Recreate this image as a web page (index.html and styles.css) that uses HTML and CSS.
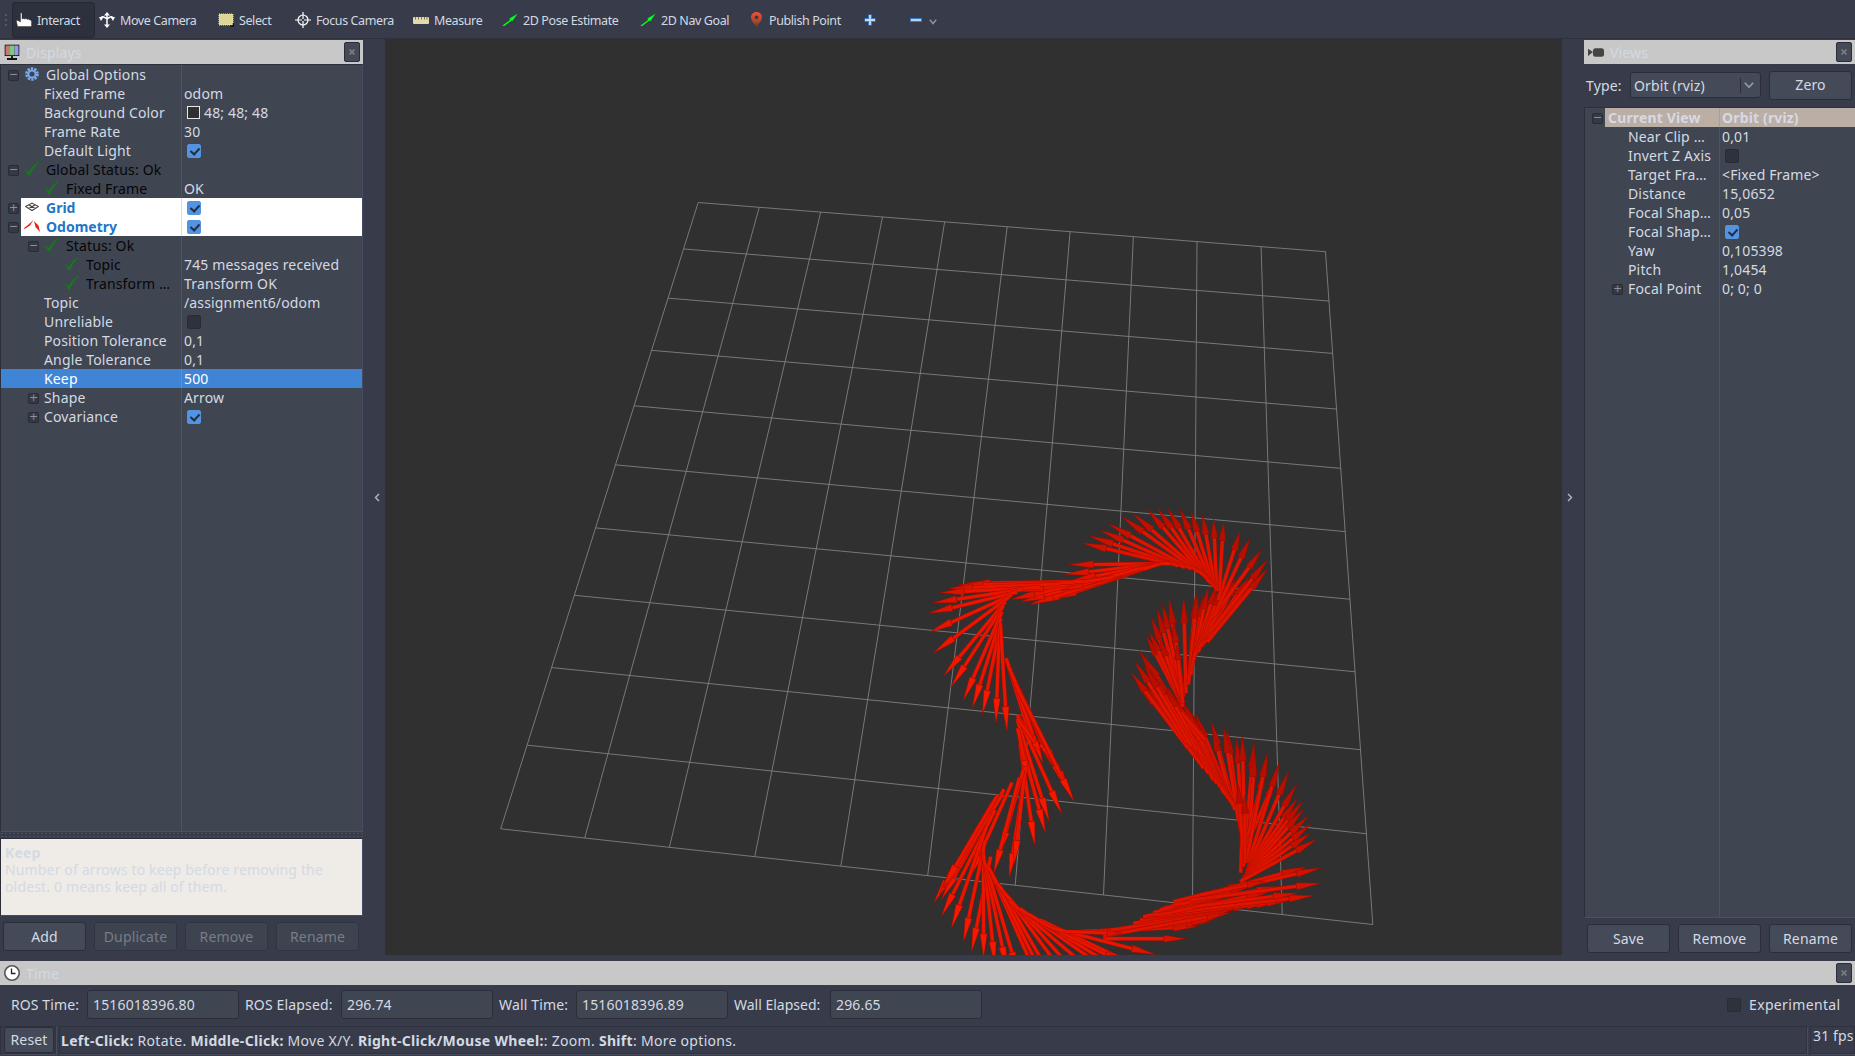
FILE: index.html
```html
<!DOCTYPE html>
<html lang="en">
<head>
<meta charset="utf-8">
<title>RViz</title>
<link rel="stylesheet" href="styles.css">
</head>
<body>
<svg class="defs" aria-hidden="true">
  <symbol id="tick" viewBox="0 0 14 14"><path d="M0.5 8 C2 8 3 9.5 3.8 11 C6 6 9 2.5 13.5 0.5 C9.5 4 6.500 8.500 4.600 13.500 C3.200 13.500 2 10 0.500 8Z" fill="#18781c" stroke="#18781c" stroke-width=".8"/></symbol>
  <symbol id="arrow" viewBox="0 0 16 14"><path d="M.5 12.500 L8 7 L7.500 5.500 L15.500 .8 L10.500 8 L9.500 7.500 L2 13.200Z" fill="#0f2"/></symbol>
  <symbol id="close" viewBox="0 0 8 8"><path d="M1.500 1.500 L6.500 6.500 M6.500 1.500 L1.500 6.500" stroke="#817f7e" stroke-width="1.700"/></symbol>
</svg>
<div class="app">
  <header class="toolbar">
    <span class="grip"></span>
    <button class="tool active"><svg width="16" height="16" viewBox="0 0 16 16"><path d="M4.500 1 Q6 0 6 2 V7 Q8 5.800 8.500 7 Q10.500 6 11 7.500 Q13 6.500 13.500 8 Q15.500 7.500 15.500 9.500 V14.500 H1.500 L.5 9.500 Q.5 7.800 2 8.500 L4.500 10Z" fill="#fff" stroke="#222" stroke-width=".4"/></svg>Interact</button>
    <button class="tool move"><svg width="16" height="16" viewBox="0 0 16 16" fill="none" stroke="#fff" stroke-width="1.500"><path d="M8 2V14M8 7Q3 3 2 6M8 7Q13 3 14 6"/><path d="M8 0L11 3.500H5ZM8 16L11 12.500H5ZM0 5L4.500 5L2 9ZM16 5L11.500 5L14 9Z" fill="#fff" stroke="none"/></svg>Move Camera</button>
    <button class="tool select"><svg width="16" height="14" viewBox="0 0 16 14"><rect x="1" y="1" width="14" height="11" fill="#ddd694" stroke="#f3ecb4" stroke-dasharray="1 1"/><path d="M12 13h3.500V10" stroke="#111" stroke-width="1.500" fill="none"/></svg>Select</button>
    <button class="tool focus"><svg width="16" height="16" viewBox="0 0 16 16" fill="none" stroke="#fff" stroke-width="1.200"><circle cx="8" cy="8" r="5"/><path d="M8 0V7M8 9V16M0 8H7M9 8H16"/></svg>Focus Camera</button>
    <button class="tool measure"><svg width="16" height="7" viewBox="0 0 16 7"><rect width="16" height="7" rx="1" fill="#e4d9aa"/><path d="M2.500 0V2.500M5.500 0V2.500M8.500 0V2.500M11.500 0V2.500M14 0V2.500" stroke="#655d3c" stroke-width=".8"/></svg>Measure</button>
    <button class="tool pose"><svg width="16" height="14"><use href="#arrow"/></svg>2D Pose Estimate</button>
    <button class="tool nav"><svg width="16" height="14"><use href="#arrow"/></svg>2D Nav Goal</button>
    <button class="tool publish"><svg width="11" height="16" viewBox="0 0 11 16"><defs><linearGradient id="pin" x2="0" y2="1"><stop stop-color="#ef5238"/><stop offset=".6" stop-color="#a9482b"/><stop offset="1" stop-color="#45362f"/></linearGradient></defs><path d="M5.500 0C9 0 11 2.500 11 5.500C11 9 7 12 5.500 16C4 12 0 9 0 5.500C0 2.500 2 0 5.500 0Z" fill="url(#pin)"/><circle cx="5.500" cy="5.300" r="1.800" fill="#333643"/></svg>Publish Point</button>
    <button class="tool plus"><svg width="12" height="12" viewBox="0 0 12 12"><path d="M6 .5V11.500M.5 6H11.500" stroke="#3a78c8" stroke-width="4"/><path d="M6 1V11M1 6H11" stroke="#c5dcf5" stroke-width="1.800"/></svg></button>
    <button class="tool minus"><svg width="12" height="4" viewBox="0 0 12 4"><path d="M0 2H12" stroke="#3a78c8" stroke-width="4"/><path d="M1 2H11" stroke="#c5dcf5" stroke-width="1.800"/></svg><svg class="drop" width="8" height="6" viewBox="0 0 8 6"><path d="M.8 .8L4 4.500L7.200 .8" fill="none" stroke="#8f939e" stroke-width="1.500"/></svg></button>
  </header>

  <main class="workspace">
    <section class="dock left">
      <h2 class="title"><svg width="16" height="16" viewBox="0 0 16 16"><rect x=".7" y=".7" width="14.600" height="11.300" fill="#111"/><path d="M1.500 1.500H6V11.200H1.500Z" fill="#c77"/><path d="M6 1.500H10.500V11.200H6Z" fill="#7c7"/><path d="M10.500 1.500H14.500V11.200H10.500Z" fill="#99e"/><path d="M8 12V14.500M3 15H13" stroke="#111" stroke-width="1.800"/></svg><span>Displays</span><button class="x"><svg width="8" height="8"><use href="#close"/></svg></button></h2>
      <div class="tree">
        <div class="row"><div class="name"><i class="tw">−</i><svg class="ico" viewBox="0 0 14 14"><circle cx="7" cy="7" r="5.500" fill="none" stroke="#78aaea" stroke-width="2.600" stroke-dasharray="2.300 1.150"/><circle cx="7" cy="7" r="3.600" fill="none" stroke="#78aaea" stroke-width="2"/></svg>Global Options</div><div class="val"></div></div>
        <div class="row"><div class="name prop">Fixed Frame</div><div class="val">odom</div></div>
        <div class="row"><div class="name prop">Background Color</div><div class="val"><i class="swatch"></i>48; 48; 48</div></div>
        <div class="row"><div class="name prop">Frame Rate</div><div class="val">30</div></div>
        <div class="row"><div class="name prop">Default Light</div><div class="val"><i class="chk on"></i></div></div>
        <div class="row ok"><div class="name"><i class="tw">−</i><svg class="ico"><use href="#tick"/></svg>Global Status: Ok</div><div class="val"></div></div>
        <div class="row ok"><div class="name l2"><svg class="ico"><use href="#tick"/></svg>Fixed Frame</div><div class="val">OK</div></div>
        <div class="row display"><div class="name"><i class="tw">+</i><svg class="ico" viewBox="0 0 14 14"><path d="M.5 6.500L7 3L13.500 6.500L7 10.500ZM3.700 4.700L10.300 8.500M10.300 4.700L3.700 8.500" fill="none" stroke="#444" stroke-width="1.100"/></svg>Grid</div><div class="val"><i class="chk on"></i></div></div>
        <div class="row display"><div class="name"><i class="tw">−</i><svg class="ico odo" viewBox="0 0 16 14"><path d="M0 9L4.500 5.500L9.500 1L6 6.500L.5 10ZM10 2L14.500 6.500L16 13L11.500 8Z" fill="#e21"/></svg>Odometry</div><div class="val"><i class="chk on"></i></div></div>
        <div class="row ok"><div class="name l1"><i class="tw">−</i><svg class="ico"><use href="#tick"/></svg>Status: Ok</div><div class="val"></div></div>
        <div class="row ok"><div class="name l3"><svg class="ico"><use href="#tick"/></svg>Topic</div><div class="val">745 messages received</div></div>
        <div class="row ok"><div class="name l3"><svg class="ico"><use href="#tick"/></svg>Transform …</div><div class="val">Transform OK</div></div>
        <div class="row"><div class="name prop">Topic</div><div class="val">/assignment6/odom</div></div>
        <div class="row"><div class="name prop">Unreliable</div><div class="val"><i class="chk"></i></div></div>
        <div class="row"><div class="name prop">Position Tolerance</div><div class="val">0,1</div></div>
        <div class="row"><div class="name prop">Angle Tolerance</div><div class="val">0,1</div></div>
        <div class="row selected"><div class="name prop">Keep</div><div class="val">500</div></div>
        <div class="row"><div class="name l1 plain"><i class="tw">+</i>Shape</div><div class="val">Arrow</div></div>
        <div class="row"><div class="name l1 plain"><i class="tw">+</i>Covariance</div><div class="val"><i class="chk on"></i></div></div>
        <div class="rest"></div>
      </div>
      <div class="splitter"></div>
      <div class="help"><b>Keep</b><br>Number of arrows to keep before removing the oldest. 0 means keep all of them.</div>
      <div class="buttons"><button class="btn">Add</button><button class="btn off">Duplicate</button><button class="btn off">Remove</button><button class="btn off">Rename</button></div>
    </section>

    <div class="collapse to-left"><svg width="6" height="9" viewBox="0 0 6 9"><path d="M5 1L1.500 4.500L5 8" fill="none" stroke="#b4bac5" stroke-width="1.400"/></svg></div>
    <svg class="viewport" id="scene" viewBox="385 39 1177 916"></svg>
    <div class="collapse to-right"><svg width="6" height="9" viewBox="0 0 6 9"><path d="M1 1L4.500 4.500L1 8" fill="none" stroke="#b4bac5" stroke-width="1.400"/></svg></div>

    <section class="dock right">
      <h2 class="title"><svg width="16" height="9" viewBox="0 0 16 9"><rect x="5" y=".3" width="11" height="8.400" rx="2.500" fill="#444"/><path d="M0 .8L5 4L0 8Z" fill="#444"/></svg><span>Views</span><button class="x"><svg width="8" height="8"><use href="#close"/></svg></button></h2>
      <div class="type"><label>Type:</label><div class="combo"><span>Orbit (rviz)</span><svg width="10" height="7" viewBox="0 0 10 7"><path d="M.8 .8L5 5.200L9.200 .8" fill="none" stroke="#9da2ad" stroke-width="1.500"/></svg></div><button class="btn">Zero</button></div>
      <div class="tree">
        <div class="row current"><div class="name plain"><i class="tw">−</i>Current View</div><div class="val">Orbit (rviz)</div></div>
        <div class="row"><div class="name l2 plain">Near Clip …</div><div class="val">0,01</div></div>
        <div class="row"><div class="name l2 plain">Invert Z Axis</div><div class="val"><i class="chk"></i></div></div>
        <div class="row"><div class="name l2 plain">Target Fra…</div><div class="val">&lt;Fixed Frame&gt;</div></div>
        <div class="row"><div class="name l2 plain">Distance</div><div class="val">15,0652</div></div>
        <div class="row"><div class="name l2 plain">Focal Shap…</div><div class="val">0,05</div></div>
        <div class="row"><div class="name l2 plain">Focal Shap…</div><div class="val"><i class="chk on"></i></div></div>
        <div class="row"><div class="name l2 plain">Yaw</div><div class="val">0,105398</div></div>
        <div class="row"><div class="name l2 plain">Pitch</div><div class="val">1,0454</div></div>
        <div class="row"><div class="name l1 plain"><i class="tw">+</i>Focal Point</div><div class="val">0; 0; 0</div></div>
        <div class="rest"></div>
      </div>
      <div class="buttons"><button class="btn">Save</button><button class="btn">Remove</button><button class="btn">Rename</button></div>
    </section>
  </main>

  <section class="time">
    <h2 class="title"><svg width="16" height="16" viewBox="0 0 16 16"><circle cx="8" cy="8" r="7.200" fill="#fff" stroke="#555" stroke-width="1.600"/><path d="M7.500 3.500V8.500H11.500" fill="none" stroke="#222" stroke-width="1.300"/></svg><span>Time</span><button class="x"><svg width="8" height="8"><use href="#close"/></svg></button></h2>
    <div class="clocks">
      <label class="c1">ROS Time:</label><div class="field">1516018396.80</div>
      <label class="c2">ROS Elapsed:</label><div class="field">296.74</div>
      <label class="c3">Wall Time:</label><div class="field">1516018396.89</div>
      <label class="c4">Wall Elapsed:</label><div class="field">296.65</div>
      <i class="chk exp"></i><label class="c5">Experimental</label>
    </div>
  </section>

  <footer class="status">
    <div class="cell reset"><button class="btn">Reset</button></div>
    <div class="cell hint"><span><b>Left-Click:</b> Rotate. <b>Middle-Click:</b> Move X/Y. <b>Right-Click/Mouse Wheel:</b>: Zoom. <b>Shift</b>: More options.</span></div>
    <div class="cell fps">31 fps</div>
  </footer>
</div>
<script src="scene.js"></script>
</body>
</html>
```
FILE: styles.css
```css
* { box-sizing: border-box; }
body { margin: 0; background: #383c4a; color: #d3dae3; font: 14px/19px "Noto Sans", "Open Sans", sans-serif; letter-spacing: 0.15px; overflow: hidden; }
button { font: inherit; letter-spacing: inherit; color: inherit; margin: 0; padding: 0; }
.defs { position: absolute; width: 0; height: 0; }
.app { width: 1855px; height: 1056px; display: flex; flex-direction: column; }

.toolbar { height: 39px; flex: none; display: flex; align-items: center; border-bottom: 1px solid #2f323e; font-size: 12.5px; letter-spacing: -0.4px; }
.grip { width: 2px; height: 12px; margin: 1px 5px 0; background: repeating-linear-gradient(#555a68 0 2px, transparent 2px 5px); }
.tool { flex: none; display: flex; align-items: center; gap: 5px; height: 36px; border: 1px solid transparent; border-radius: 3px; background: none; padding: 0 4px; white-space: nowrap; margin-top: 2px; }
.tool.active { width: 83px; padding-left: 3px; background: #2d313d; border-color: #262934; }
.tool.move { width: 118px; padding-left: 3px; }
.tool.select { width: 77px; }
.tool.focus { width: 118px; }
.tool.measure { width: 89px; }
.tool.pose { width: 138px; }
.tool.nav { width: 110px; }
.tool.publish { width: 114px; gap: 7px; padding-left: 5px; }
.tool.plus { width: 46px; }
.tool.minus { width: 40px; gap: 7px; }
.tool .drop { margin-top: 3px; }

.workspace { height: 916px; flex: none; display: flex; }
.dock { display: flex; flex-direction: column; }
.dock.left { width: 363px; }
.dock.right { width: 271px; }
.collapse { width: 22px; display: flex; align-items: center; justify-content: center; }
.to-left { padding-left: 6px; }
.to-right { padding-right: 6px; }
.viewport { display: block; width: 1177px; height: 916px; background: #303030; }

.title { display: flex; align-items: center; height: 24px; margin: 1px 0 0; padding: 0 3px 0 4px; flex: none; background: #c8c8c8; font-size: 14px; font-weight: 400; }
.title span { flex: 1; margin-left: 6px; }
.x { display: flex; align-items: center; justify-content: center; width: 16px; height: 20px; border: 1px solid #2b2e39; border-radius: 2px; background: #444a58; }

.tree { flex: none; display: flex; flex-direction: column; background: #404552; border: 1px solid #2d303b; border-right-color: #464b66; border-bottom-color: #4b5062; }
.left .tree { height: 768px; }
.right .tree { height: 811px; margin-top: 7px; border-right: 0; }
.row { display: grid; grid-template-columns: 181px 1fr; height: 19px; flex: none; white-space: nowrap; }
.rest { flex: 1; background: linear-gradient(90deg, transparent 180px, #50545f 180px 181px, transparent 181px); }
.right .row { grid-template-columns: 135px 1fr; }
.right .rest { background: linear-gradient(90deg, transparent 134px, #50545f 134px 135px, transparent 135px); }
.name { display: flex; align-items: center; border-right: 1px solid #50545f; overflow: hidden; }
.val { display: flex; align-items: center; padding-left: 2px; }
.prop { padding-left: 43px; }
.l1 { padding-left: 20px; }
.l2 { padding-left: 40px; }
.l3 { padding-left: 60px; }
.plain .tw { margin-right: 5px; }
.l2.plain { padding-left: 43px; }
.tw { flex: none; width: 11px; height: 11px; margin: 2px 2px 0 7px; border: 1px solid #292c36; border-radius: 2px; background: #353945; color: #8b909c; font: 11px/8px "DejaVu Sans", sans-serif; text-align: center; letter-spacing: 0; }
.ico { flex: none; width: 14px; height: 14px; margin: -2px 7px 0 4px; }
.odo { width: 16px; margin: -1px 6px 0 3px; }
.ok .name { color: #050607; }
.display .name { color: #2176c7; font-weight: 700; letter-spacing: 0; background: linear-gradient(90deg, #404552 20px, #fff 20px); border-color: #ddd; }
.display .val { background: #fff; }
.selected { background: #4084d6; color: #fff; }
.selected .name { border-color: #5b8fd0; }
.current { font-weight: 700; color: #d5dae5; }
.current .name { background: linear-gradient(90deg, #404552 20px, #bbaea5 20px); border-color: #a99e98; }
.current .val { background: #bbaea5; }
.chk { flex: none; width: 14px; height: 14px; margin: 0 0 0 3px; border: 1px solid #292c36; border-radius: 2px; background: #2e323d; }
.chk.on { border-color: #5294e2; background: #5294e2; }
.chk.on::after { content: ""; display: block; width: 4px; height: 7px; margin: 1px 0 0 4px; border: solid #252c3c; border-width: 0 2px 2px 0; transform: rotate(42deg); }
.swatch { width: 13px; height: 13px; margin: 0 4px 0 3px; border: 1px solid #e8e8e8; background: #303030; }

.splitter { flex: none; height: 6px; background: radial-gradient(circle, #4a4e5e 0.700px, transparent 1px) 0 0 / 4px 3px; }
.help { flex: none; height: 78px; padding: 5px 4px; border: 1px solid #2b2e39; border-right-color: #464b66; border-bottom-color: #464b66; background: #efebe7; line-height: 17px; }
.buttons { display: flex; gap: 8px; padding: 6px 3px; }
.btn { width: 83px; height: 29px; border: 1px solid #2b2e39; border-radius: 3px; background: #444a58; line-height: 26px; }
.btn.off { color: #787d88; background: #3e4350; border-color: #313541; }
.type { flex: none; display: flex; align-items: center; padding: 6px 3px 0 2px; height: 36px; }
.type label { width: 44px; }
.combo { display: flex; align-items: center; width: 131px; height: 26px; margin-right: 8px; padding: 0 6px 0 3px; border: 1px solid #2b2e39; border-radius: 3px; background: #444a58; }
.combo span { flex: 1; }
.combo svg { box-sizing: content-box; padding: 4px 0 4px 3px; border-left: 1px solid #2b2e39; }

.left .splitter { margin-top: 0; }
.time { height: 71px; flex: none; padding-top: 5px; }
.clocks { display: flex; align-items: center; height: 38px; padding-left: 11px; white-space: nowrap; }
.field { flex: none; width: 152px; height: 29px; padding-left: 5px; border: 1px solid #2b2e39; border-radius: 3px; background: #404552; line-height: 27px; }
.clocks label { flex: none; margin-left: 6px; }
.clocks .c1 { width: 76px; margin-left: 0; letter-spacing: 0.1px; }
.clocks .c2 { width: 96px; }
.clocks .c3 { width: 77px; }
.clocks .c4 { width: 96px; letter-spacing: 0; }
.clocks .exp { margin: 1px 0 0 auto; }
.clocks .c5 { width: 106px; margin-left: 8px; letter-spacing: 0.35px; }

.status { display: flex; gap: 3px; height: 30px; }
.cell { height: 28px; border: 1px solid #2f323e; box-shadow: 1px 1px 0 #484c5b; }
.reset { width: 56px; padding: 0 3px; }
.reset .btn { width: 50px; height: 26px; line-height: 24px; }
.hint { width: 1748px; line-height: 28px; padding-left: 1px; letter-spacing: 0.3px; }
.fps { flex: 1; padding-left: 2px; line-height: 17px; white-space: nowrap; }
```
FILE: scene.js
```js
const NS = "http://www.w3.org/2000/svg";
const scene = document.getElementById("scene");

function add(tag, attrs) {
  const el = document.createElementNS(NS, tag);
  for (const k in attrs) el.setAttribute(k, attrs[k]);
  scene.appendChild(el);
}

// Ground grid: unit square projected onto the four visible corners.
const [p0, p1, p2, p3] = [[698.2, 202.500], [1325.500, 251.700], [1372.800, 924.500], [500.700, 828.800]];
const sx = p0[0] - p1[0] + p2[0] - p3[0], sy = p0[1] - p1[1] + p2[1] - p3[1];
const ax = p1[0] - p2[0], ay = p1[1] - p2[1], bx = p3[0] - p2[0], by = p3[1] - p2[1];
const det = ax * by - bx * ay;
const g = (sx * by - bx * sy) / det, h = (ax * sy - sx * ay) / det;
function project(u, v) {
  const w = g * u + h * v + 1;
  return [
    ((p1[0] - p0[0] + g * p1[0]) * u + (p3[0] - p0[0] + h * p3[0]) * v + p0[0]) / w,
    ((p1[1] - p0[1] + g * p1[1]) * u + (p3[1] - p0[1] + h * p3[1]) * v + p0[1]) / w
  ];
}
let d = "";
for (let i = 0; i <= 10; i++) {
  d += "M" + project(i / 10, 0) + "L" + project(i / 10, 1);
  d += "M" + project(0, i / 10) + "L" + project(1, i / 10);
}
add("path", { d, stroke: "#808080", "stroke-width": 0.9, fill: "none" });

// Odometry arrows: tail x, tail y, tip x, tip y (thirds of a pixel from each group origin).
const groups = [
  { ox: 920, oy: 720, list: [
    [550,656,793,656],[475,635,830,620],[530,634,870,605],[550,632,885,597],[590,628,905,580],[550,648,930,578],
    [600,627,965,560],[640,610,1010,552],[660,600,1050,548],[670,592,985,545],[690,590,1080,545],[720,588,1110,540],
    [670,590,900,540],[700,578,935,520],[730,565,960,505],[700,585,1140,532],[780,575,1178,527],[720,570,1000,495],
    [760,575,1050,515],[760,555,1080,500],[760,545,985,490],[820,560,1130,520],
    [810,540,1199,490],[850,525,1155,442],[900,515,1199,445],[840,525,1030,485],
    [962,458,967,300],[968,350,950,58],[962,330,922,32],[955,300,912,28],[975,400,967,52],
    [970,440,1002,72],[985,390,1005,100],[978,370,1035,150],[982,370,1065,180],[980,420,1042,100],
    [985,430,1077,131],[985,440,1105,158],[982,450,1128,196],[980,455,1130,238],[978,462,1147,245],
    [974,470,1149,270],[970,475,1163,290],[966,480,1170,314],[962,484,1167,342],[960,485,1187,360],
    [945,270,875,8],[935,250,880,40],[970,400,955,200],[975,430,975,230],
    [940,258,828,-15],[932,245,815,-20],[925,235,805,-30],[918,225,800,-40],[912,220,790,-50],[900,200,770,-60],[890,190,760,-75],[880,180,745,-95],[865,160,720,-110],
    [850,145,695,-130],[840,130,680,-100],[825,110,660,-105],[805,85,650,-120],[790,65,636,-139],
    [800,70,646,-174],[820,60,660,-205],[830,50,672,-190],[840,60,690,-150],[850,55,710,-120],[850,50,730,-90],[855,60,760,-50]
  ] },
  { ox: 920, oy: 720, list: [
    [258,-185,350,110],[260,-180,368,128],[266,-160,395,135],[272,-145,405,145],[276,-135,415,155],[286,-110,437,200],[293,-95,450,220],[300,-80,461,242],
    [292,-15,350,70],[292,-15,424,279],[292,0,387,302],[292,25,376,337],[300,70,344,374],[292,-5,360,90],[295,30,318,150],
    [318,140,268,470],[314,160,283,430],[310,150,240,400],[298,173,222,458],[276,188,150,470],[252,208,66,535],[234,225,43,545],[217,250,60,520],[246,225,75,500],[230,230,70,500],
    [225,270,66,586],[200,318,95,622],[196,360,131,663],[212,410,155,693],[190,380,191,712],[190,400,225,735],
    [192,420,262,750],[198,435,296,765],[205,440,355,780],[215,460,400,780],[210,450,375,780],[232,490,445,780],[250,515,495,790],
    [268,543,540,775],[300,566,590,770],[325,582,640,775],[360,600,665,745],[360,605,620,735],[400,625,704,703],[440,635,600,640]
  ] },
  { ox: 920, oy: 500, list: [
    [845,765,740,570],[830,750,700,530],[815,740,675,500],
    [790,620,681,412],[788,610,690,400],[785,600,695,355],[786,598,712,330],[788,590,728,316],[790,585,748,300],[790,610,720,420],
    [798,580,791,298],[790,590,760,370],[788,600,770,440],[805,553,828,283],[806,545,832,290],[812,525,850,290],[815,505,864,266],[820,480,890,255],[828,462,930,240],[845,440,958,232],
    [822,470,910,250],[835,455,905,270],[838,445,945,240],[850,430,985,235],[855,425,1010,240],[862,425,1041,208],[870,395,1041,181],[880,350,1023,152],[890,330,988,119],[895,300,959,99],
    [898,275,910,72],[890,272,881,62],[886,265,848,48],[882,260,814,38],[877,254,781,30],[872,250,745,28],[866,243,715,28],
    [860,235,684,30],[850,225,642,43],[835,215,610,53],[815,207,568,73],[795,202,544,92],[775,197,511,109],[755,192,491,130],
    [748,191,450,194],[735,190,437,223],[720,192,460,240],[715,193,470,255],[705,196,400,298],[690,200,350,310],[670,205,332,313],[645,212,305,305],
    [610,222,275,298],[660,205,430,270],[580,232,300,275],[490,245,140,250],[460,248,118,255],[420,252,88,265],[360,262,62,278],[310,268,42,308],
    [292,276,30,339],[275,285,32,395],[266,292,43,457],[256,305,73,525],[250,318,95,558],[246,335,131,599],
    [243,355,158,621],[242,370,188,640],[238,390,228,665],[241,370,261,690]
  ] }
];

for (const { ox, oy, list } of groups) {
  for (const [x1, y1, x2, y2] of list) {
    const fx = ox + x1 / 3, fy = oy + y1 / 3;
    const full = Math.hypot(x2 - x1, y2 - y1), ux = (x2 - x1) / full, uy = (y2 - y1) / full;
    const tx = ox + x2 / 3 + ux * 1.5, ty = oy + y2 / 3 + uy * 1.5;
    const head = Math.min(25, full / 3 * 0.27);
    const hx = tx - ux * head, hy = ty - uy * head;
    const light = (uy + 1) / 2;
    const headColor = `rgb(${Math.round(182 + 66 * light)},${Math.round(14 + 10 * light)},0)`;
    const shaft = `M${fx} ${fy}L${hx} ${hy}`;
    add("path", { d: shaft, stroke: "#a81000", "stroke-width": 4 });
    add("path", { d: shaft, stroke: uy < 0 ? "#de1400" : "#e81500", "stroke-width": 3.1 });
    add("path", {
      d: `M${tx} ${ty}L${hx - uy * 3.6} ${hy + ux * 3.6}L${hx + uy * 3.6} ${hy - ux * 3.6}Z`,
      fill: headColor, stroke: "#8a0e00", "stroke-width": 0.5
    });
  }
}
```
